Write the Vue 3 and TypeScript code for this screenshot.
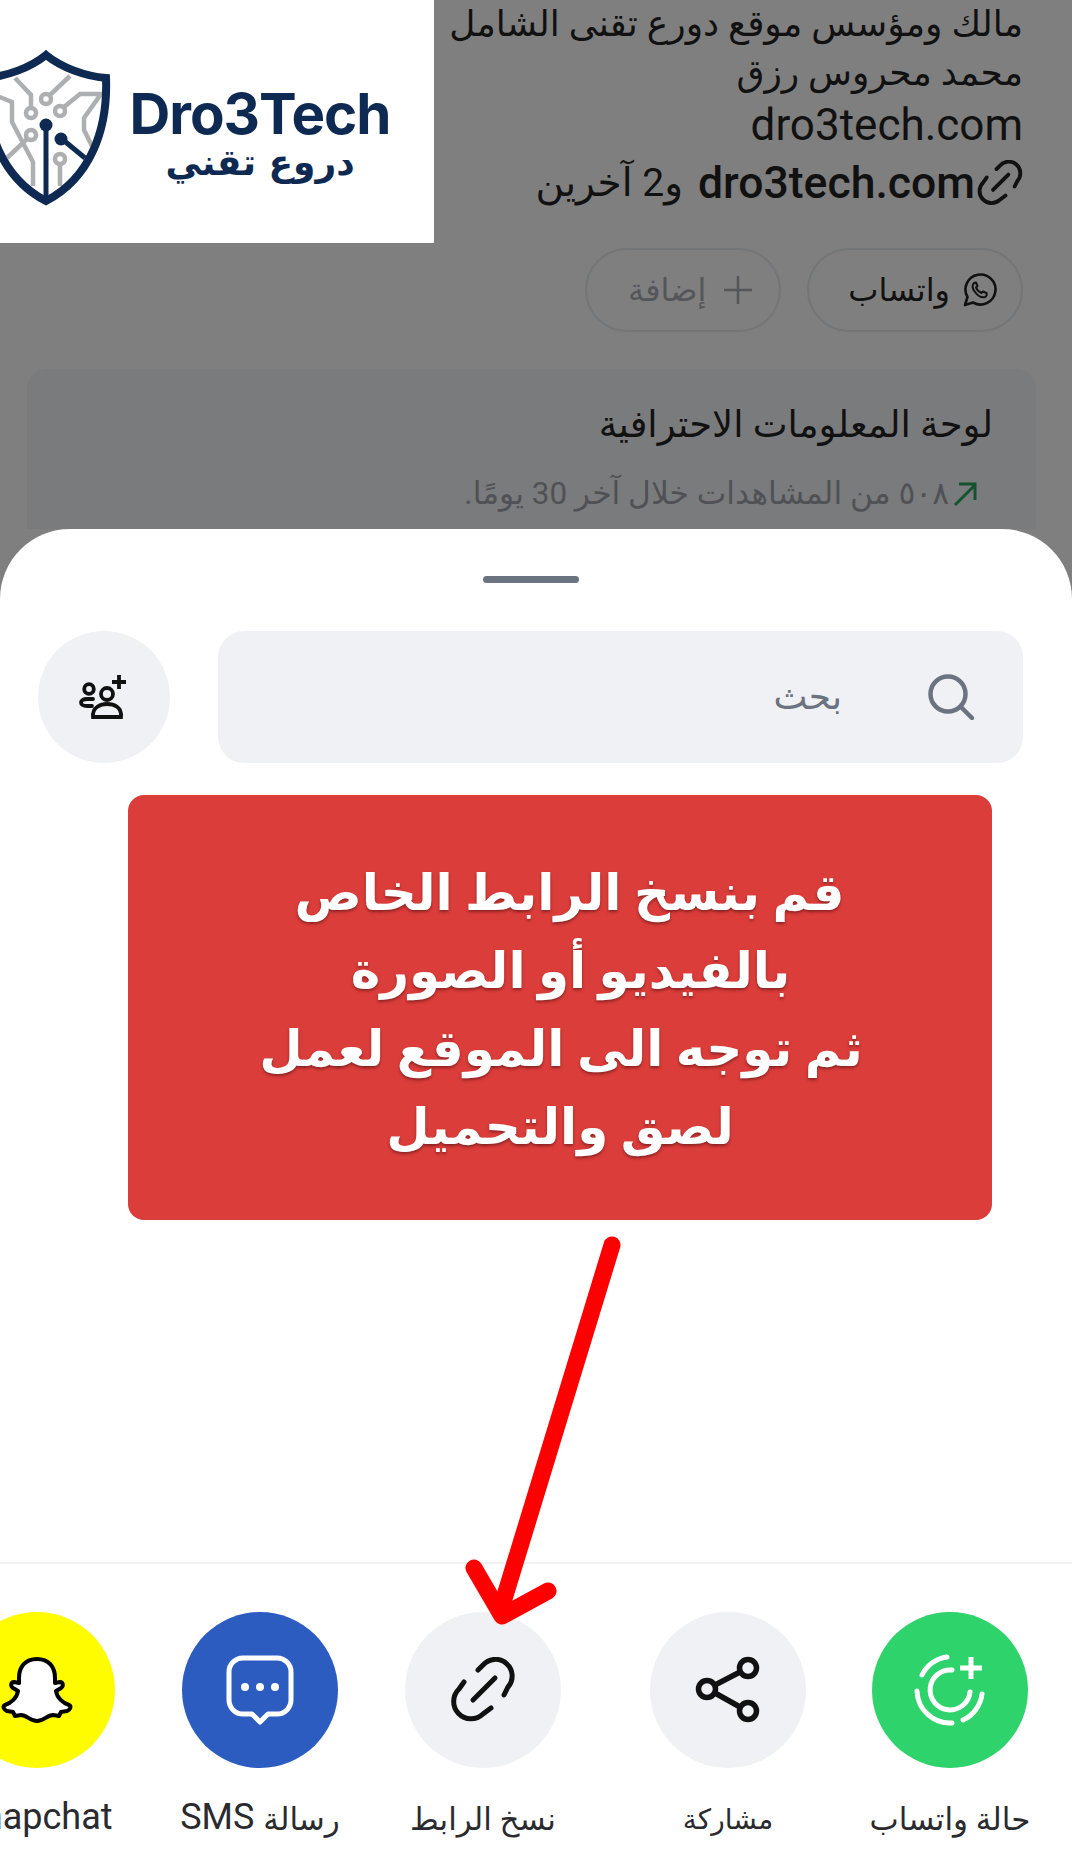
<script setup lang="ts">
interface ShareItem {
  label: string
  latin: string
  kind: string
}
const items: ShareItem[] = [
  { label: 'حالة واتساب', latin: '', kind: 'status' },
  { label: 'مشاركة', latin: '', kind: 'share' },
  { label: 'نسخ الرابط', latin: '', kind: 'link' },
  { label: 'رسالة', latin: 'SMS', kind: 'sms' },
  { label: '', latin: 'Snapchat', kind: 'snap' }
]
</script>

<template>
  <div class="page">
    <section class="profile">
      <p class="line line-a">مالك ومؤسس موقع دورع تقنى الشامل</p>
      <p class="line line-b">محمد محروس رزق</p>
      <p class="line line-c">dro3tech.com</p>
      <p class="line link-line">
        <svg class="tiny-link" viewBox="0 0 66 66" fill="none" stroke="#111" stroke-width="5.5" stroke-linecap="round">
          <path d="M28 13 L33 8 A16 16 0 0 1 58 30 L54 38" />
          <path d="M14 25 L9 32 A16 16 0 0 0 33 57 L41 51" />
          <path d="M23 43 L45 21" />
        </svg>
        <span class="site">dro3tech.com</span>
        <span class="others">و2 آخرين</span>
      </p>
      <div class="pills">
        <div class="pill">
          <svg class="pill-icon" viewBox="0 0 36 36" fill="none" stroke="#111" stroke-width="2.6" stroke-linejoin="round" stroke-linecap="round">
            <path d="M4 33 L6.5 25 A15 15 0 1 1 12 30.5 Z" />
            <path d="M13 11 C11 13 11 16 14 20 C17 24 21 26 24 25 C26 24 26 22 25.5 21 L22 19.5 L20.5 21 C18 20 16 18 15 15.5 L16.5 14 L15 10.5 C14.5 10.5 13.5 10.5 13 11 Z" stroke-width="2" />
          </svg>
          <span>واتساب</span>
        </div>
        <div class="pill pill-muted">
          <svg class="pill-icon plus-icon" viewBox="0 0 30 30" fill="none" stroke="#55565a" stroke-width="2.6">
            <path d="M15 1 V29 M1 15 H29" />
          </svg>
          <span>إضافة</span>
        </div>
      </div>
      <div class="dash">
        <h2>لوحة المعلومات الاحترافية</h2>
        <p class="dash-sub">
          <svg class="trend" viewBox="0 0 26 26" fill="none" stroke="#15532e" stroke-width="3">
            <path d="M3 24 L23 4 M7 3 H23 V19" />
          </svg>
          <span>٥٠٨ من المشاهدات خلال آخر 30 يومًا.</span>
        </p>
      </div>
    </section>

    <section class="sheet">
      <div class="handle"></div>
      <div class="search-row">
        <div class="search">
          <svg class="search-icon" viewBox="0 0 46 46" fill="none" stroke="#6b7280" stroke-width="4.5" stroke-linecap="round">
            <circle cx="20" cy="20" r="17.5" />
            <path d="M33 33 L44 44" />
          </svg>
          <span>بحث</span>
        </div>
        <div class="add-people">
          <svg viewBox="0 0 50 46" fill="none" stroke="#111" stroke-width="3.8">
            <circle cx="10" cy="15" r="4.8" />
            <path d="M14 25 H8 C0 25 0 32 8 32 H13" stroke-linecap="round" />
            <circle cx="28" cy="20" r="6" />
            <path d="M14 43 C13 33 22 30 28 30 C35 30 43 33 42 43 Z" />
            <path d="M40 1 V15 M33 8 H47" />
          </svg>
        </div>
      </div>

      <div class="notice">
        <p>قم بنسخ الرابط الخاص</p>
        <p>بالفيديو أو الصورة</p>
        <p>ثم توجه الى الموقع لعمل</p>
        <p>لصق والتحميل</p>
      </div>

      <div class="spacer"></div>

      <div class="share-row">
        <div v-for="item in items" :key="item.kind" class="share-item" :class="'item-' + item.kind">
          <div class="disc">
            <svg v-if="item.kind === 'status'" viewBox="0 0 80 80" class="disc-icon" fill="none" stroke="#fff" stroke-width="5" stroke-linecap="round">
              <path d="M42 20 A20 20 0 1 0 60 42" />
              <path d="M12 25 A33 33 0 0 1 37 7" />
              <path d="M7 41 A33 33 0 0 0 42 73" />
              <path d="M53 70 A33 33 0 0 0 72 44" />
              <path d="M61 7 V29 M50 18 H72" stroke-linecap="butt" />
            </svg>
            <svg v-else-if="item.kind === 'share'" viewBox="0 0 72 72" class="disc-icon" fill="none" stroke="#111" stroke-width="5.5">
              <circle cx="56" cy="14" r="8.5" />
              <circle cx="15" cy="35" r="8.5" />
              <circle cx="56" cy="57" r="8.5" />
              <path d="M23 31 L48 18 M23 39 L48 53" />
            </svg>
            <svg v-else-if="item.kind === 'link'" viewBox="0 0 66 66" class="disc-icon link-icon" fill="none" stroke="#111" stroke-width="5" stroke-linecap="round">
              <path d="M28 13 L33 8 A16 16 0 0 1 58 30 L54 38" />
              <path d="M14 25 L9 32 A16 16 0 0 0 33 57 L41 51" />
              <path d="M23 43 L45 21" />
            </svg>
            <svg v-else-if="item.kind === 'sms'" viewBox="0 0 72 72" class="disc-icon" fill="none" stroke="#fff" stroke-width="5" stroke-linejoin="round">
              <path d="M19 4 H53 A14 14 0 0 1 67 18 V46 A14 14 0 0 1 53 60 H44 L36 68 L28 60 H19 A14 14 0 0 1 5 46 V18 A14 14 0 0 1 19 4 Z" />
              <circle cx="21" cy="33" r="4" fill="#fff" stroke="none" />
              <circle cx="36" cy="33" r="4" fill="#fff" stroke="none" />
              <circle cx="51" cy="33" r="4" fill="#fff" stroke="none" />
            </svg>
            <svg v-else viewBox="0 0 72 72" class="disc-icon" fill="#fff" stroke="#000" stroke-width="4" stroke-linejoin="round">
              <path d="M36 5 C48 5 54 13 54 24 L54 29 L59 28 C62 28 63 32 60 34 L55 37 C56 44 62 49 68 51 C71 52 69 56 66 57 L60 58 L58 62 L52 61 C46 61 43 67 36 67 C29 67 26 61 20 61 L14 62 L12 58 L6 57 C3 56 1 52 4 51 C10 49 16 44 17 37 L12 34 C9 32 10 28 13 28 L18 29 L18 24 C18 13 24 5 36 5 Z" />
            </svg>
          </div>
          <div class="share-label">
            <span v-if="item.label">{{ item.label }}</span>
            <span v-if="item.latin" class="latin">{{ item.latin }}</span>
          </div>
        </div>
      </div>
    </section>

    <div class="logo">
      <svg class="shield" viewBox="-20 40 140 170" fill="none">
        <g stroke="#adafb1" stroke-width="4.5">
          <circle cx="46" cy="99" r="5" />
          <path d="M50 95 L70 76" />
          <circle cx="60" cy="111" r="5" />
          <path d="M64 107 L80 94 H101 L84 118 V130 L92 146" />
          <circle cx="31" cy="113" r="5" />
          <path d="M31 108 V95 L15 78" />
          <circle cx="31" cy="135" r="5" />
          <path d="M27 139 L7 158" />
          <path d="M-8 94 L12 102 V122 L33 162 V186" />
          <circle cx="60" cy="159" r="5" />
          <path d="M60 164 V186" />
        </g>
        <g stroke="#0f2a52">
          <path d="M46 55 C62 68 85 76 106 78 C108 130 90 178 46 201 C2 178 -16 130 -14 78 C7 76 30 68 46 55 Z" stroke-width="8" />
          <path d="M46 125 V198" stroke-width="5" />
          <path d="M62 139 L85 158" stroke-width="5" />
        </g>
        <circle cx="46" cy="125" r="6.5" fill="#0f2a52" />
        <circle cx="61" cy="139" r="6.5" fill="#0f2a52" />
      </svg>
      <div class="brand">
        <div class="brand-en">Dro3Tech</div>
        <div class="brand-ar">دروع تقني</div>
      </div>
    </div>

    <svg class="arrow" viewBox="0 0 1072 1854" fill="none" stroke="#fe0000" stroke-linecap="round" stroke-linejoin="round">
      <path d="M612 1245 L500 1612" stroke-width="17" />
      <path d="M474 1568 L502 1616 L548 1591" stroke-width="17" />
    </svg>
  </div>
</template>

<style>
html, body { margin: 0; background: #fff; }
</style>

<style scoped>
.page {
  position: relative;
  width: 1072px;
  height: 1854px;
  overflow: hidden;
  display: flex;
  flex-direction: column;
  background: #7f7f7f;
  direction: rtl;
  font-family: Roboto, "DejaVu Sans", sans-serif;
  color: #111;
}
p, h2 { margin: 0; font-weight: 400; }

.profile {
  flex: none;
  height: 529px;
  padding: 0 49px 0 0;
  box-sizing: border-box;
  overflow: hidden;
}
.line { white-space: nowrap; }
.line-a { font-size: 36px; line-height: 48px; }
.line-b { font-size: 36px; line-height: 50px; }
.line-c { font-size: 44px; line-height: 54px; }
.link-line {
  display: flex;
  align-items: center;
  gap: 15px;
  height: 62px;
  font-weight: 500;
}
.site { font-size: 44.5px; margin-right: -13px; }
.others { font-size: 39px; font-weight: 400; }
.tiny-link { width: 46px; height: 46px; flex: none; }

.pills { display: flex; gap: 26px; margin-top: 34px; }
.pill {
  display: flex;
  align-items: center;
  gap: 11px;
  height: 84px;
  box-sizing: border-box;
  padding: 0 24px 0 39px;
  border: 2px solid #747577;
  border-radius: 42px;
  font-size: 32px;
  font-weight: 500;
}
.pill-muted { color: #55565a; gap: 17px; padding: 0 26px 0 41px; }
.pill-icon { width: 36px; height: 36px; flex: none; }
.plus-icon { width: 30px; height: 30px; }

.dash {
  width: 1009px;
  height: 240px;
  margin: 37px -13px 0 0;
  padding: 31px 43px 0 0;
  box-sizing: border-box;
  background: #7a7b7c;
  border-radius: 20px;
}
.dash h2 { font-size: 37px; line-height: 50px; }
.dash-sub {
  display: flex;
  align-items: center;
  gap: 3px;
  margin: 22px 15px 0 0;
  font-size: 31.4px;
  line-height: 44px;
  color: #505154;
}
.trend { width: 26px; height: 26px; flex: none; }

.sheet {
  flex: 1;
  min-height: 0;
  display: flex;
  flex-direction: column;
  background: #fff;
  border-radius: 70px 70px 0 0;
}
.handle {
  flex: none;
  align-self: center;
  width: 96px;
  height: 7px;
  margin: 47px 11px 0 0;
  background: #6b7280;
  border-radius: 4px;
}
.search-row {
  flex: none;
  display: flex;
  gap: 48px;
  margin-top: 48px;
  padding: 0 49px 0 38px;
}
.search {
  flex: 1;
  height: 132px;
  display: flex;
  align-items: center;
  gap: 86px;
  padding-right: 49px;
  background: #f0f1f5;
  border-radius: 26px;
  color: #6b7280;
  font-size: 36px;
}
.search-icon { width: 46px; height: 46px; flex: none; }
.add-people {
  flex: none;
  width: 132px;
  height: 132px;
  display: flex;
  align-items: center;
  justify-content: center;
  background: #f0f1f5;
  border-radius: 50%;
}
.add-people svg { width: 50px; height: 46px; }

.notice {
  flex: none;
  align-self: flex-start;
  width: 864px;
  height: 425px;
  margin: 32px 80px 0 0;
  padding-top: 59px;
  box-sizing: border-box;
  background: #db3d3a;
  border-radius: 16px;
  color: #fff;
  text-align: center;
  font-size: 50px;
  font-weight: 700;
  line-height: 78px;
  text-shadow: 0 2px 3px rgba(90, 20, 20, .6);
}
.notice p { font-weight: 700; }
.notice p:nth-child(1) { padding-left: 19px; }
.notice p:nth-child(2) { padding-left: 21px; }
.notice p:nth-child(3) { padding-left: 2px; }
.spacer { flex: 1; }

.share-row {
  flex: none;
  display: flex;
  gap: 66px;
  height: 292px;
  padding: 48px 44px 0 0;
  box-sizing: border-box;
  border-top: 2px solid #f0f1f3;
}
.share-item { flex: none; width: 156px; }
.item-share { margin-left: 23px; }
.item-link, .item-sms { margin-left: 1px; }
.disc {
  width: 156px;
  height: 156px;
  border-radius: 50%;
  display: flex;
  align-items: center;
  justify-content: center;
  background: #f0f1f5;
}
.disc-icon { width: 72px; height: 72px; }
.item-status .disc { background: #2ed36b; }
.item-status .disc-icon { width: 80px; height: 80px; }
.item-link .disc-icon { width: 66px; height: 66px; }
.item-sms .disc { background: #2c5cc0; }
.item-snap .disc { background: #fffc00; }
.share-label {
  display: flex;
  align-items: center;
  justify-content: center;
  gap: 9px;
  height: 44px;
  margin-top: 30px;
  font-size: 31px;
  line-height: 44px;
  white-space: nowrap;
  color: #2a2b2e;
}
.item-share .share-label { font-size: 28px; }
.latin { font-size: 36px; direction: ltr; margin-bottom: 6px; }

.logo {
  position: absolute;
  top: 0;
  left: 0;
  width: 434px;
  height: 243px;
  background: #fff;
  direction: ltr;
  overflow: hidden;
}
.shield {
  position: absolute;
  left: -20px;
  top: 40px;
  width: 140px;
  height: 170px;
}
.brand {
  position: absolute;
  left: 128px;
  top: 85px;
  width: 264px;
  text-align: center;
  color: #0f2a52;
  white-space: nowrap;
}
.brand-en {
  font-family: Inter, sans-serif;
  font-size: 56.5px;
  font-weight: 650;
  line-height: 58px;
  letter-spacing: -1px;
}
.brand-ar {
  font-family: "DejaVu Sans", sans-serif;
  font-size: 36px;
  font-weight: 700;
  line-height: 40px;
}
.arrow {
  position: absolute;
  inset: 0;
  width: 1072px;
  height: 1854px;
  pointer-events: none;
}
</style>
